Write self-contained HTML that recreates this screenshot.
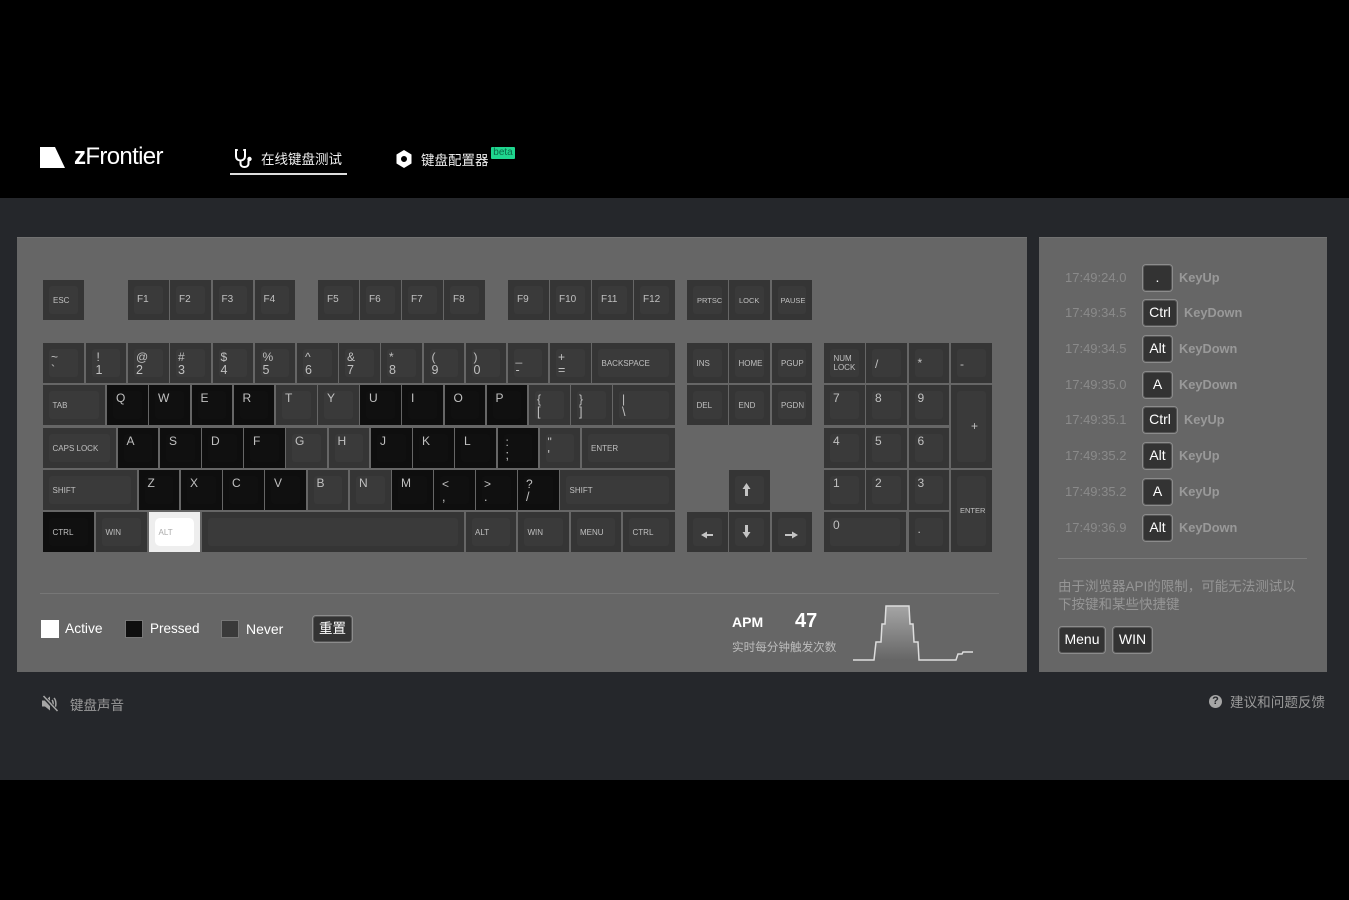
<!DOCTYPE html>
<html lang="zh-CN"><head><meta charset="utf-8"><title>zFrontier</title>
<style>
html,body{margin:0;padding:0;width:1349px;height:900px;background:#000;overflow:hidden;font-family:"Liberation Sans","Noto Sans CJK SC",sans-serif}
.a{position:absolute}
#main{position:absolute;left:0;top:198px;width:1349px;height:582px;background:#25272b}
.p{position:absolute;background:#666;top:237px;height:435px;box-shadow:inset 0 1px 0 #717171}
.k{position:absolute;height:40px;width:40.500px;background:#353535;box-sizing:border-box;color:#c0c0c0;font-size:12px}
.k:before{content:"";position:absolute;left:6px;right:6px;top:6px;bottom:6px;background:#3a3a3a;border-radius:3px}
.k.b{background:#0e0e0e}.k.b:before{background:#101010}
.k.w{background:#eee;color:#aaa}.k.w:before{background:#fff;border-radius:5px}
.k span{position:absolute;white-space:nowrap;line-height:12px}
.s{font-size:8px;left:9.500px;top:15px}
.q{font-size:7.500px;left:10px;top:14.500px}
.f{font-size:10px;left:9px;top:14px}
.m{font-size:12px;left:9px;top:7px}
.u{font-size:12px;left:8px;top:8px}
.l{font-size:12.500px;left:8px;top:21px}
.r0{top:280px}.r1{top:343px}.r2{top:385px}.r3{top:427.500px}.r4{top:469.500px}.r5{top:512px}
.t{position:absolute;left:1065px;font-size:13px;color:#8a8a8a;line-height:16px;white-space:nowrap}
.c{position:absolute;left:1142px;height:28px;box-sizing:border-box;border:1px solid #8c8c8c;border-radius:4px;background:#333;color:#fff;font-size:14px;line-height:25px;text-align:center;box-shadow:inset 0 0 0 1px #555}
.e{position:absolute;font-size:12.800px;font-weight:bold;color:#999;line-height:16px;white-space:nowrap}
.x{position:absolute;white-space:nowrap}
.btn{position:absolute;box-sizing:border-box;height:28px;top:626px;border:1px solid #8c8c8c;border-radius:4px;background:#333;color:#fff;font-size:14px;line-height:25px;text-align:center;box-shadow:inset 0 0 0 1px #555}
</style></head><body>

<svg class="a" style="left:38px;top:146px" width="28" height="24" viewBox="0 0 28 24"><polygon points="2,1 17,1 27,22 2,22" fill="#fff"/></svg>
<div class="x" style="left:74px;top:143px;font-size:24px;line-height:28px;color:#fff;letter-spacing:-.65px"><b>z</b>Frontier</div>

<svg class="a" style="left:233px;top:148px" width="22" height="21" viewBox="0 0 22 21" fill="none" stroke="#fff" stroke-width="2" stroke-linecap="round"><path d="M4 2H3V8C3 11 5 12.500 7.500 12.500S12 11 12 8V2H11"/><path d="M7.500 13V15.500C7.500 18 9.500 19 11.500 19S15.500 18 15.500 15.500V13"/><circle cx="16.500" cy="11" r="1.700" fill="#fff" stroke-width="1"/></svg>
<div class="x" style="left:261px;top:150px;font-size:13.500px;line-height:20px;color:#eee">在线键盘测试</div>
<div class="a" style="left:230px;top:173px;width:117px;height:2px;background:#ddd"></div>

<svg class="a" style="left:395px;top:149px" width="18" height="20" viewBox="0 0 18 20"><path fill-rule="evenodd" d="M9 1L16.500 5.500V14.500L9 19L1.500 14.500V5.500ZM9 7A3 3 0 1 0 9 13A3 3 0 1 0 9 7Z" fill="#fff"/></svg>
<div class="x" style="left:421px;top:151px;font-size:13.500px;line-height:20px;color:#eee">键盘配置器</div>
<div class="a" style="left:491px;top:147px;width:24px;height:12px;background:#1fd68f;border-radius:1px;color:#0b6b48;font-size:10px;line-height:11px;text-align:center">beta</div>

<div id="main"></div>
<div class="p" style="left:17px;width:1010px"></div>
<div class="p" style="left:1039px;width:288px"></div>

<!-- function row -->
<div class="k r0" style="left:43px"><span class="s" style="left:10px">ESC</span></div>
<div class="k r0" style="left:128px"><span class="f">F1</span></div>
<div class="k r0" style="left:170px"><span class="f">F2</span></div>
<div class="k r0" style="left:212.500px"><span class="f">F3</span></div>
<div class="k r0" style="left:254.500px"><span class="f">F4</span></div>
<div class="k r0" style="left:318px"><span class="f">F5</span></div>
<div class="k r0" style="left:360px"><span class="f">F6</span></div>
<div class="k r0" style="left:402px"><span class="f">F7</span></div>
<div class="k r0" style="left:444px"><span class="f">F8</span></div>
<div class="k r0" style="left:508px"><span class="f">F9</span></div>
<div class="k r0" style="left:550px"><span class="f">F10</span></div>
<div class="k r0" style="left:592px"><span class="f">F11</span></div>
<div class="k r0" style="left:634px"><span class="f">F12</span></div>
<div class="k r0" style="left:687px"><span class="q">PRTSC</span></div>
<div class="k r0" style="left:729px"><span class="q">LOCK</span></div>
<div class="k r0" style="left:771.500px"><span class="q" style="left:9px">PAUSE</span></div>

<!-- number row -->
<div class="k r1" style="left:43px"><span class="u">~</span><span class="l">`</span></div>
<div class="k r1" style="left:85.500px"><span class="u" style="left:11px">!</span><span class="l" style="left:10px">1</span></div>
<div class="k r1" style="left:128px"><span class="u">@</span><span class="l">2</span></div>
<div class="k r1" style="left:170px"><span class="u">#</span><span class="l">3</span></div>
<div class="k r1" style="left:212.500px"><span class="u">$</span><span class="l">4</span></div>
<div class="k r1" style="left:254.500px"><span class="u">%</span><span class="l">5</span></div>
<div class="k r1" style="left:297px"><span class="u">^</span><span class="l">6</span></div>
<div class="k r1" style="left:339px"><span class="u">&amp;</span><span class="l">7</span></div>
<div class="k r1" style="left:381px"><span class="u">*</span><span class="l">8</span></div>
<div class="k r1" style="left:423.500px"><span class="u">(</span><span class="l">9</span></div>
<div class="k r1" style="left:465.500px"><span class="u">)</span><span class="l">0</span></div>
<div class="k r1" style="left:507.500px"><span class="u">_</span><span class="l">-</span></div>
<div class="k r1" style="left:550px"><span class="u">+</span><span class="l">=</span></div>
<div class="k r1" style="left:592px;width:83px"><span class="s">BACKSPACE</span></div>

<!-- qwerty -->
<div class="k r2" style="left:43px;width:62px"><span class="s">TAB</span></div>
<div class="k r2 b" style="left:107px"><span class="m">Q</span></div>
<div class="k r2 b" style="left:149px"><span class="m">W</span></div>
<div class="k r2 b" style="left:191.500px"><span class="m">E</span></div>
<div class="k r2 b" style="left:233.500px"><span class="m">R</span></div>
<div class="k r2" style="left:276px"><span class="m">T</span></div>
<div class="k r2" style="left:318px"><span class="m">Y</span></div>
<div class="k r2 b" style="left:360px"><span class="m">U</span></div>
<div class="k r2 b" style="left:402px"><span class="m">I</span></div>
<div class="k r2 b" style="left:444.500px"><span class="m">O</span></div>
<div class="k r2 b" style="left:486.500px"><span class="m">P</span></div>
<div class="k r2" style="left:529px"><span class="u">{</span><span class="l">[</span></div>
<div class="k r2" style="left:571px"><span class="u">}</span><span class="l">]</span></div>
<div class="k r2" style="left:613px;width:62px"><span class="u" style="left:9px">|</span><span class="l" style="left:9px">\</span></div>

<!-- asdf -->
<div class="k r3" style="left:43px;width:73px"><span class="s">CAPS LOCK</span></div>
<div class="k r3 b" style="left:117.500px"><span class="m">A</span></div>
<div class="k r3 b" style="left:160px"><span class="m">S</span></div>
<div class="k r3 b" style="left:202px"><span class="m">D</span></div>
<div class="k r3 b" style="left:244px"><span class="m">F</span></div>
<div class="k r3" style="left:286px"><span class="m">G</span></div>
<div class="k r3" style="left:328.500px"><span class="m">H</span></div>
<div class="k r3 b" style="left:371px"><span class="m">J</span></div>
<div class="k r3 b" style="left:413px"><span class="m">K</span></div>
<div class="k r3 b" style="left:455px"><span class="m">L</span></div>
<div class="k r3 b" style="left:497.500px"><span class="u">:</span><span class="l">;</span></div>
<div class="k r3" style="left:539.500px"><span class="u">"</span><span class="l">'</span></div>
<div class="k r3" style="left:581.500px;width:93.500px"><span class="s">ENTER</span></div>

<!-- zxcv -->
<div class="k r4" style="left:43px;width:94px"><span class="s">SHIFT</span></div>
<div class="k r4 b" style="left:138.500px"><span class="m">Z</span></div>
<div class="k r4 b" style="left:181px"><span class="m">X</span></div>
<div class="k r4 b" style="left:223px"><span class="m">C</span></div>
<div class="k r4 b" style="left:265px"><span class="m">V</span></div>
<div class="k r4" style="left:307.500px"><span class="m">B</span></div>
<div class="k r4" style="left:350px"><span class="m">N</span></div>
<div class="k r4 b" style="left:392px"><span class="m">M</span></div>
<div class="k r4 b" style="left:434px"><span class="u">&lt;</span><span class="l">,</span></div>
<div class="k r4 b" style="left:476px"><span class="u">&gt;</span><span class="l">.</span></div>
<div class="k r4 b" style="left:518px"><span class="u">?</span><span class="l">/</span></div>
<div class="k r4" style="left:560px;width:115px"><span class="s">SHIFT</span></div>

<!-- bottom -->
<div class="k r5 b" style="left:43px;width:51px"><span class="s">CTRL</span></div>
<div class="k r5" style="left:96px;width:51px"><span class="s">WIN</span></div>
<div class="k r5 w" style="left:149px;width:51px"><span class="s">ALT</span></div>
<div class="k r5" style="left:201.500px;width:262px"></div>
<div class="k r5" style="left:465.500px;width:50.500px"><span class="s">ALT</span></div>
<div class="k r5" style="left:518px;width:50.500px"><span class="s">WIN</span></div>
<div class="k r5" style="left:570.500px;width:50.500px"><span class="s">MENU</span></div>
<div class="k r5" style="left:623px;width:52px"><span class="s">CTRL</span></div>

<!-- nav -->
<div class="k r1" style="left:687px"><span class="s">INS</span></div>
<div class="k r1" style="left:729px"><span class="s">HOME</span></div>
<div class="k r1" style="left:771.500px"><span class="s">PGUP</span></div>
<div class="k r2" style="left:687px"><span class="s">DEL</span></div>
<div class="k r2" style="left:729px"><span class="s">END</span></div>
<div class="k r2" style="left:771.500px"><span class="s">PGDN</span></div>
<div class="k r4" style="left:729px"></div>
<div class="k r5" style="left:687px"></div>
<div class="k r5" style="left:729px"></div>
<div class="k r5" style="left:771.500px"></div>
<svg class="a" style="left:687px;top:470px" width="126" height="82" viewBox="0 0 126 82" fill="#c4c4c4"><path d="M59.500 13L63.500 19H61V26H58V19H55.500Z"/><path d="M58 55H61V62H63.500L59.500 68L55.500 62H58Z"/><path d="M14 65L20 61.500V64H26V66H20V68.500Z"/><path d="M111 65L105 61.500V64H98V66H105V68.500Z"/></svg>

<!-- numpad -->
<div class="k r1" style="left:824px"><span class="s" style="top:11px;line-height:9px;white-space:normal;width:26px">NUM LOCK</span></div>
<div class="k r1" style="left:866px"><span class="u" style="left:9px;top:15px">/</span></div>
<div class="k r1" style="left:908.500px"><span class="u" style="left:9px;top:14px">*</span></div>
<div class="k r1" style="left:951px"><span class="u" style="left:9px;top:15px">-</span></div>
<div class="k r2" style="left:824px"><span class="m">7</span></div>
<div class="k r2" style="left:866px"><span class="m">8</span></div>
<div class="k r2" style="left:908.500px"><span class="m">9</span></div>
<div class="k r2" style="left:951px;height:82.500px"><span class="u" style="left:20px;top:35px">+</span></div>
<div class="k r3" style="left:824px"><span class="m">4</span></div>
<div class="k r3" style="left:866px"><span class="m">5</span></div>
<div class="k r3" style="left:908.500px"><span class="m">6</span></div>
<div class="k r4" style="left:824px"><span class="m">1</span></div>
<div class="k r4" style="left:866px"><span class="m">2</span></div>
<div class="k r4" style="left:908.500px"><span class="m">3</span></div>
<div class="k r4" style="left:951px;height:82.500px"><span class="q" style="left:9px;top:35px">ENTER</span></div>
<div class="k r5" style="left:824px;width:82px"><span class="m">0</span></div>
<div class="k r5" style="left:908.500px"><span class="u" style="left:9px;top:11px">.</span></div>

<!-- legend -->
<div class="a" style="left:40px;top:593px;width:959px;height:1px;background:#777"></div>
<div class="a" style="left:41px;top:620px;width:18px;height:18px;background:#fff"></div>
<div class="x" style="left:65px;top:620px;font-size:13.800px;line-height:18px;color:#fff">Active</div>
<div class="a" style="left:125px;top:620px;width:18px;height:18px;background:#0e0e0e;box-sizing:border-box;border:1px solid #777"></div>
<div class="x" style="left:150px;top:620px;font-size:13.500px;line-height:18px;color:#fff">Pressed</div>
<div class="a" style="left:221px;top:620px;width:18px;height:18px;background:#3a3a3a;box-sizing:border-box;border:1px solid #777"></div>
<div class="x" style="left:246px;top:620px;font-size:14px;line-height:18px;color:#fff">Never</div>
<div class="btn" style="left:312px;top:615px;width:41px;font-size:13.500px">重置</div>

<!-- APM -->
<div class="x" style="left:732px;top:614px;font-size:14px;font-weight:bold;line-height:16px;color:#fff">APM</div>
<div class="x" style="left:795px;top:610px;font-size:20px;font-weight:bold;line-height:22px;color:#fff">47</div>
<div class="x" style="left:732px;top:640px;font-size:11.600px;line-height:16px;color:#bdbdbd">实时每分钟触发次数</div>
<svg class="a" style="left:850px;top:600px" width="130" height="66" viewBox="850 600 130 66"><defs><linearGradient id="g" x1="0" y1="0" x2="0" y2="1"><stop offset="0" stop-color="#a5a5a5"/><stop offset="1" stop-color="#666"/></linearGradient></defs><path d="M874 660L876 642H881L882 624H885L886 606H909L910 624H913L914 642H918L919 660Z" fill="url(#g)"/><path d="M853 660H874L876 642H881L882 624H885L886 606H909L910 624H913L914 642H918L919 660H956L958 654H962L963 652H973" fill="none" stroke="#ddd" stroke-width="1.500"/></svg>

<!-- log -->
<div class="t" style="top:270px">17:49:24.0</div><div class="c" style="top:264px;width:31px">.</div><div class="e" style="left:1179px;top:270px">KeyUp</div>
<div class="t" style="top:305px">17:49:34.5</div><div class="c" style="top:299px;width:36px">Ctrl</div><div class="e" style="left:1184px;top:305px">KeyDown</div>
<div class="t" style="top:341px">17:49:34.5</div><div class="c" style="top:335px;width:31px">Alt</div><div class="e" style="left:1179px;top:341px">KeyDown</div>
<div class="t" style="top:377px">17:49:35.0</div><div class="c" style="top:371px;width:31px">A</div><div class="e" style="left:1179px;top:377px">KeyDown</div>
<div class="t" style="top:412px">17:49:35.1</div><div class="c" style="top:406px;width:36px">Ctrl</div><div class="e" style="left:1184px;top:412px">KeyUp</div>
<div class="t" style="top:448px">17:49:35.2</div><div class="c" style="top:442px;width:31px">Alt</div><div class="e" style="left:1179px;top:448px">KeyUp</div>
<div class="t" style="top:484px">17:49:35.2</div><div class="c" style="top:478px;width:31px">A</div><div class="e" style="left:1179px;top:484px">KeyUp</div>
<div class="t" style="top:520px">17:49:36.9</div><div class="c" style="top:514px;width:31px">Alt</div><div class="e" style="left:1179px;top:520px">KeyDown</div>

<div class="a" style="left:1058px;top:558px;width:249px;height:1px;background:#7c7c7c"></div>
<div class="a" style="left:1058px;top:577.500px;width:245px;font-size:13.500px;line-height:18px;color:#969696">由于浏览器API的限制，可能无法测试以下按键和某些快捷键</div>
<div class="btn" style="left:1058px;width:48px">Menu</div>
<div class="btn" style="left:1112px;width:41px">WIN</div>

<!-- footer -->
<svg class="a" style="left:41px;top:695px" width="18" height="17" viewBox="0 0 18 17" fill="#a6a6a6"><path d="M1 5.500H4L9 1.500V15.500L4 11.500H1Z"/><path d="M11 5C12.500 6.500 12.500 10 11 12M13 3C15.500 5.500 15.500 11.500 13 14" fill="none" stroke="#a6a6a6" stroke-width="1.500"/><path d="M2 1L16 16" stroke="#25272b" stroke-width="3.500"/><path d="M2.500 1L16.500 16" stroke="#a6a6a6" stroke-width="1.500"/></svg>
<div class="x" style="left:70px;top:697px;font-size:13.500px;line-height:18px;color:#9a9a9a">键盘声音</div>
<div class="a" style="left:1209px;top:695px;width:13px;height:13px;border-radius:50%;background:#a6a6a6;color:#25272b;font-size:11px;font-weight:bold;line-height:13px;text-align:center">?</div>
<div class="x" style="left:1230px;top:694px;font-size:13.600px;line-height:18px;color:#9a9a9a">建议和问题反馈</div>
</body></html>
